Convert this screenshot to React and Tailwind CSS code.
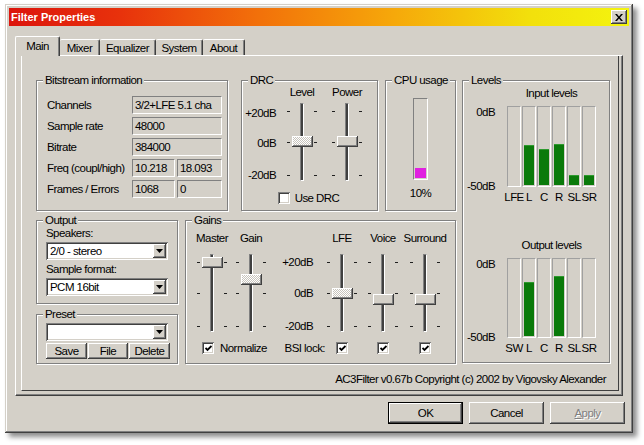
import React from 'react';

const RAISED =
  'bg-[#d4d0c8] shadow-[inset_-1px_-1px_#404040,inset_1px_1px_#ffffff,inset_-2px_-2px_#808080,inset_2px_2px_#d4d0c8]';
const SUNKEN =
  'shadow-[inset_1px_1px_#808080,inset_-1px_-1px_#ffffff,inset_2px_2px_#404040,inset_-2px_-2px_#d4d0c8]';
const EDGE = 'border border-t-[#808080] border-l-[#808080] border-r-white border-b-white';
const THUMB = 'shadow-[inset_-1px_-1px_#404040,inset_1px_1px_#ffffff,inset_-2px_-2px_#808080]';
const HATCH = 'bg-[repeating-conic-gradient(#ffffff_0_25%,#c8c4bc_0_50%)] bg-[length:2px_2px]';

const TICKS = [8, 39, 72];

function Group({ title, className = '', children }) {
  return (
    <fieldset className={`border border-[#808080] shadow-[1px_1px_0_#ffffff,inset_1px_1px_0_#ffffff] ${className}`}>
      <legend className="ml-[6px] px-[2px] bg-[#d4d0c8] leading-[12px] whitespace-nowrap">{title}</legend>
      {children}
    </fieldset>
  );
}

function TickMarks() {
  return (
    <svg width="3" height="78" className="shrink-0">
      {TICKS.map((t) => (
        <rect key={t} x="0" y={t} width="3" height="1" fill="#202020" />
      ))}
    </svg>
  );
}

function Slider({ thumb, hatch }) {
  return (
    <div className="relative flex w-[30px] h-[78px]">
      <TickMarks />
      <div className="ml-[10px] w-[4px] h-full border border-t-[#808080] border-l-[#808080] border-r-white border-b-white bg-[#404040]" />
      <div className="ml-[10px]">
        <TickMarks />
      </div>
      <div
        className={`absolute left-[5px] w-[21px] h-[11px] ${hatch ? HATCH : 'bg-[#d4d0c8]'} ${THUMB}`}
        style={{ top: thumb - 5 }}
      />
    </div>
  );
}

function Check({ checked }) {
  return (
    <div className={`w-[12px] h-[12px] shrink-0 bg-white ${SUNKEN} flex items-center justify-center`}>
      {checked && (
        <svg width="7" height="7" viewBox="0 0 7 7">
          <polyline points="0.5,3 2.5,5 6.5,1" stroke="#000" strokeWidth="1.8" fill="none" />
        </svg>
      )}
    </div>
  );
}

function Combo({ value }) {
  return (
    <div className={`flex h-[18px] w-[122px] bg-white p-[2px] ${SUNKEN}`}>
      <div className="flex-1 pl-[2px] leading-[14px] whitespace-nowrap overflow-hidden">{value}</div>
      <div className={`w-[13px] h-[14px] ${RAISED} flex items-center justify-center`}>
        <svg width="7" height="4" viewBox="0 0 7 4">
          <path d="M0 0h7L3.5 4z" fill="#000" />
        </svg>
      </div>
    </div>
  );
}

function Field({ children, className = '' }) {
  return (
    <div className={`h-[18px] ${EDGE} pl-[2px] leading-[16px] whitespace-nowrap overflow-hidden ${className}`}>
      {children}
    </div>
  );
}

function LevelBlock({ title, labels, fills, h, className = '' }) {
  return (
    <div className={`flex ${className}`}>
      <div
        className="w-[32px] pt-[19px] flex flex-col justify-between text-right leading-[12px]"
        style={{ height: 19 + h + 5 }}
      >
        <div>0dB</div>
        <div>-50dB</div>
      </div>
      <div className="ml-[12px] flex flex-col items-center w-[89px]">
        <div className="leading-[12px] whitespace-nowrap">{title}</div>
        <div className="mt-[7px] flex gap-[1px]">
          {fills.map((f, i) => (
            <div
              key={i}
              className="w-[14px] border border-t-[#a0a0a0] border-l-[#a0a0a0] border-r-white border-b-white flex flex-col justify-end pb-px"
              style={{ height: h }}
            >
              {f > 0 && <div className="mx-[1px] bg-[#0a7a0a] border-t border-[#2e9a2e]" style={{ height: f }} />}
            </div>
          ))}
        </div>
        <div className="mt-[4px] flex gap-[1px] leading-[12px]">
          {labels.map((l) => (
            <div key={l} className="w-[14px] flex justify-center whitespace-nowrap">{l}</div>
          ))}
        </div>
      </div>
    </div>
  );
}

const bitstream = [
  ['Channels', ['3/2+LFE 5.1 cha']],
  ['Sample rate', ['48000']],
  ['Bitrate', ['384000']],
  ['Freq (coupl/high)', ['10.218', '18.093']],
  ['Frames / Errors', ['1068', '0']],
];

const tabs = [
  ['Main', 'w-[45px]'],
  ['Mixer', 'w-[40px]'],
  ['Equalizer', 'w-[56px]'],
  ['System', 'w-[47px]'],
  ['About', 'w-[42px]'],
];

function GainCol({ title, thumb, hatch, start, children }) {
  return (
    <div className="w-[30px] flex flex-col items-center shrink-0">
      <div className="mt-[6px] leading-[12px] whitespace-nowrap">{title}</div>
      <div className="mt-[10px]">
        <Slider thumb={thumb} hatch={hatch} />
      </div>
      <div className={`mt-[10px] self-stretch flex ${start ? 'justify-start' : 'justify-center'}`}>{children}</div>
    </div>
  );
}

export default function App() {
  return (
    <div className="w-[644px] h-[445px] bg-white overflow-hidden pt-[4px] pl-[5px] font-['Liberation_Sans',Arial,sans-serif] text-[11.5px] tracking-[-0.55px] leading-[14px] text-black">
      <div className="w-[628px] h-[429px] bg-[#d4d0c8] p-[4px] flex flex-col shadow-[inset_-1px_-1px_#404040,inset_1px_1px_#d4d0c8,inset_-2px_-2px_#808080,inset_2px_2px_#ffffff,4px_4px_5px_rgba(0,0,0,0.45)]">
        {/* caption */}
        <div className="h-[18px] flex items-center pl-[2px] pr-[2px] bg-[linear-gradient(to_right,#dc140c_0%,#e8320c_18%,#f2700a_40%,#f6a80a_62%,#f2e00c_84%,#f4f40e_100%)]">
          <span className="font-bold text-[11px] tracking-normal text-white">Filter Properties</span>
          <div className={`ml-auto w-[16px] h-[14px] ${RAISED} flex items-center justify-center`}>
            <svg width="8" height="7" viewBox="0 0 8 7">
              <path d="M0 0h2l2 2.5L6 0h2L5 3.5 8 7H6L4 4.5 2 7H0l3-3.5z" fill="#000" />
            </svg>
          </div>
        </div>

        {/* tabs */}
        <div className="mt-[10px] ml-[6px] h-[20px] flex items-end relative z-10">
          {tabs.map(([t, w], i) =>
            i === 0 ? (
              <div
                key={t}
                className={`${w} h-[20px] flex justify-center pt-[2px] bg-[#d4d0c8] border-t border-l border-r border-t-white border-l-white border-r-[#404040] rounded-t-[2px] shadow-[inset_-1px_0_#808080]`}
              >
                {t}
              </div>
            ) : (
              <div
                key={t}
                className={`${w} h-[16px] mb-px flex justify-center pt-px border-t border-r border-t-white border-r-[#404040] rounded-t-[2px] shadow-[inset_-1px_0_#808080]`}
              >
                {t}
              </div>
            )
          )}
        </div>

        {/* tab panel */}
        <div className="-mt-px mx-[6px] h-[341px] flex border border-t-white border-l-white border-r-[#404040] border-b-[#404040] shadow-[inset_-1px_-1px_#808080] pl-[5px] pr-[3px] pb-[4px]">
          <div className="flex-1 border-l border-r border-b border-l-white border-r-[#404040] border-b-[#404040]">
            <div className="flex pt-[18px] pl-[14px]">
              <div className="w-[420px]">
                {/* top row */}
                <div className="flex h-[137px]">
                  <Group title="Bitstream information" className="w-[192px] h-full">
                    <div className="mt-[10px] ml-[10px] flex flex-col gap-[3px]">
                      {bitstream.map(([label, vals]) => (
                        <div key={label} className="flex items-center">
                          <div className="w-[85px] whitespace-nowrap">{label}</div>
                          {vals.length === 1 ? (
                            <Field className="w-[90px]">{vals[0]}</Field>
                          ) : (
                            <div className="flex gap-[2px]">
                              <Field className="w-[43px]">{vals[0]}</Field>
                              <Field className="w-[45px]">{vals[1]}</Field>
                            </div>
                          )}
                        </div>
                      ))}
                    </div>
                  </Group>

                  <Group title="DRC" className="ml-[13px] w-[137px] h-full">
                    <div className="flex">
                      <div className="w-[34px] shrink-0" />
                      <div className="ml-[11px] w-[30px] flex justify-center leading-[12px]">Level</div>
                      <div className="ml-[15px] w-[30px] flex justify-center leading-[12px]">Power</div>
                    </div>
                    <div className="mt-[5px] flex">
                      <div className="w-[34px] h-[78px] flex flex-col items-end leading-[12px]">
                        <div className="mt-[4px]">+20dB</div>
                        <div className="mt-[18px]">0dB</div>
                        <div className="mt-[20px]">-20dB</div>
                      </div>
                      <div className="ml-[11px]">
                        <Slider thumb={38} hatch />
                      </div>
                      <div className="ml-[15px]">
                        <Slider thumb={38} />
                      </div>
                    </div>
                    <div className="mt-[11px] flex justify-center items-center gap-[5px] pr-[2px]">
                      <Check />
                      <span className="leading-[12px]">Use DRC</span>
                    </div>
                  </Group>

                  <Group title="CPU usage" className="ml-[7px] w-[71px] h-full">
                    <div className="flex flex-col items-center">
                      <div className={`mt-[12px] w-[15px] h-[82px] ${EDGE} flex flex-col justify-end px-[1px] pb-[1px]`}>
                        <div className="h-[10px] bg-[#e020e0]" />
                      </div>
                      <div className="mt-[7px] leading-[12px]">10%</div>
                    </div>
                  </Group>
                </div>

                {/* bottom row */}
                <div className="mt-[3px] flex">
                  <div className="w-[142px]">
                    <Group title="Output" className="w-full h-[90px]">
                      <div className="ml-[9px] mt-px leading-[12px]">Speakers:</div>
                      <div className="ml-[9px] mt-[3px]">
                        <Combo value="2/0 - stereo" />
                      </div>
                      <div className="ml-[9px] mt-[3px] leading-[12px]">Sample format:</div>
                      <div className="ml-[9px] mt-[3px]">
                        <Combo value="PCM 16bit" />
                      </div>
                    </Group>
                    <Group title="Preset" className="mt-[4px] w-full h-[56px]">
                      <div className="ml-[9px] mt-[3px]">
                        <Combo value="" />
                      </div>
                      <div className="ml-[9px] mt-[2px] flex gap-px">
                        <div className={`w-[41px] h-[16px] ${RAISED} flex items-center justify-center leading-[12px]`}>Save</div>
                        <div className={`w-[40px] h-[16px] ${RAISED} flex items-center justify-center leading-[12px]`}>File</div>
                        <div className={`w-[41px] h-[16px] ${RAISED} flex items-center justify-center leading-[12px]`}>Delete</div>
                      </div>
                    </Group>
                  </div>

                  <Group title="Gains" className="ml-[7px] w-[271px] h-[150px]">
                    <div className="flex pl-[11px]">
                      <GainCol title="Master" thumb={8} start>
                        <div className="ml-[5px] flex items-center gap-[6px] whitespace-nowrap">
                          <Check checked />
                          <span className="leading-[12px]">Normalize</span>
                        </div>
                      </GainCol>
                      <div className="ml-[9px]">
                        <GainCol title="Gain" thumb={25} hatch />
                      </div>
                      <div className="w-[61px] shrink-0 flex flex-col items-end">
                        <div className="mt-[28px] h-[78px] pr-[14px] flex flex-col items-end leading-[12px]">
                          <div className="mt-[2px]">+20dB</div>
                          <div className="mt-[19px]">0dB</div>
                          <div className="mt-[21px]">-20dB</div>
                        </div>
                        <div className="mt-[10px] pr-[2px] leading-[12px] whitespace-nowrap">BSI lock:</div>
                      </div>
                      <GainCol title="LFE" thumb={39} hatch>
                        <Check checked />
                      </GainCol>
                      <div className="ml-[11px]">
                        <GainCol title="Voice" thumb={45}>
                          <Check checked />
                        </GainCol>
                      </div>
                      <div className="ml-[12px]">
                        <GainCol title="Surround" thumb={45}>
                          <Check checked />
                        </GainCol>
                      </div>
                    </div>
                  </Group>
                </div>
              </div>

              <Group title="Levels" className="ml-[6px] w-[148px] h-[289px]">
                <LevelBlock
                  className="mt-px"
                  title="Input levels"
                  labels={['LFE', 'L', 'C', 'R', 'SL', 'SR']}
                  fills={[0, 40, 36, 41, 10, 10]}
                  h={81}
                />
                <LevelBlock
                  className="mt-[36px]"
                  title="Output levels"
                  labels={['SW', 'L', 'C', 'R', 'SL', 'SR']}
                  fills={[0, 54, 0, 60, 0, 0]}
                  h={80}
                />
              </Group>
            </div>

            <div className="mt-[8px] pr-[12px] text-right leading-[14px] whitespace-nowrap">
              AC3Filter v0.67b Copyright (c) 2002 by Vigovsky Alexander
            </div>
          </div>
        </div>

        {/* dialog buttons */}
        <div className="mt-[6px] flex justify-end gap-[6px] pr-[4px]">
          <div className="w-[75px] h-[22px] border border-black flex">
            <div className={`flex-1 ${RAISED} flex items-center justify-center`}>OK</div>
          </div>
          <div className={`w-[75px] h-[22px] ${RAISED} flex items-center justify-center`}>Cancel</div>
          <div className={`w-[75px] h-[22px] ${RAISED} flex items-center justify-center text-[#808080] [text-shadow:1px_1px_0_#ffffff]`}>
            <span>
              <span className="underline">A</span>pply
            </span>
          </div>
        </div>
      </div>
    </div>
  );
}
